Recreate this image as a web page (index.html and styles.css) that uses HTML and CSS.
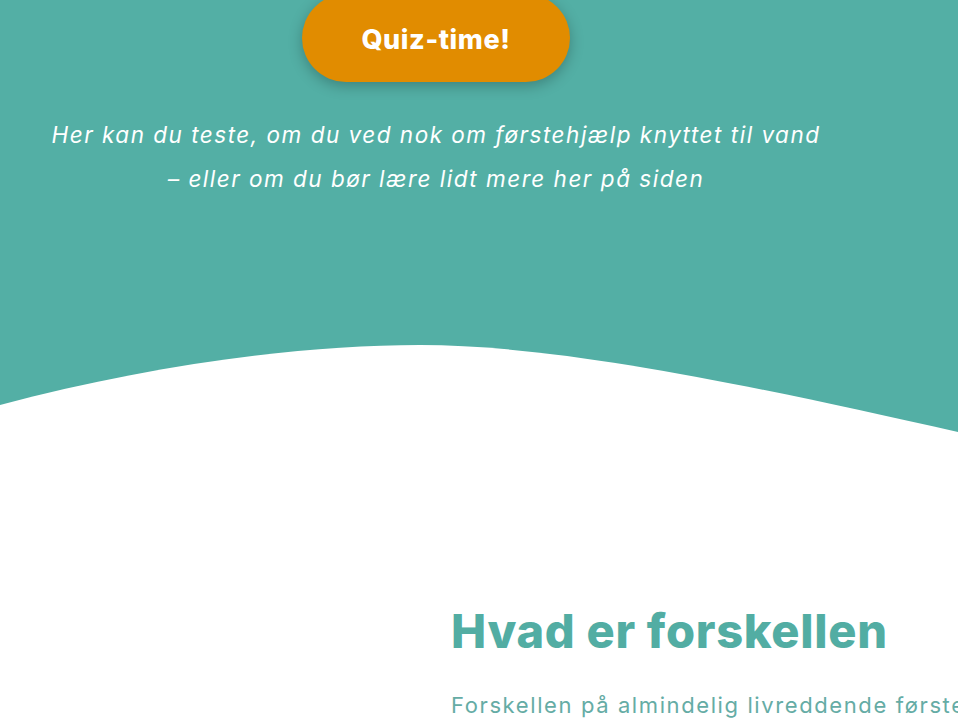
FILE: index.html
```html
<!DOCTYPE html>
<html lang="da">
<head>
<meta charset="utf-8">
<title>Quiz-time</title>
<link rel="stylesheet" href="styles.css">
</head>
<body>
<section class="hero">
  <div class="hero-inner">
    <a class="quiz-btn" href="#">Quiz-time!</a>
    <p class="intro">Her kan du teste, om du ved nok om førstehjælp knyttet til vand<br>– eller om du bør lære lidt mere her på siden</p>
  </div>
  <svg class="wave" viewBox="0 0 958 100" preserveAspectRatio="none" aria-hidden="true">
    <path d="M0,65 C150,25 300,5 420,5 C560,5 750,45 958,92 L958,100 L0,100 Z" fill="#ffffff"/>
  </svg>
</section>
<section class="content">
  <h2 class="title">Hvad er forskellen</h2>
  <p class="lead">Forskellen på almindelig livreddende førstehjælp og førstehjælp ved vand</p>
</section>
</body>
</html>
```
FILE: styles.css
```css
html, body {
  margin: 0;
  padding: 0;
  background: #ffffff;
  overflow: hidden;
}
body {
  font-family: Inter, "Open Sans", sans-serif;
}
.hero {
  background: #53afa5;
}
.hero-inner {
  width: 872px;
  height: 340px;
  display: flex;
  flex-direction: column;
  align-items: center;
}
.quiz-btn {
  margin-top: -6px;
  width: 268px;
  height: 88px;
  border-radius: 44px;
  background: #e18c00;
  color: #ffffff;
  font-weight: 800;
  font-size: 27px;
  letter-spacing: 0.6px;
  text-decoration: none;
  display: flex;
  align-items: center;
  justify-content: center;
  padding-top: 2px;
  box-sizing: border-box;
  box-shadow: 0 4px 14px rgba(0, 0, 0, 0.25);
}
.intro {
  margin: 31px 0 0;
  text-align: center;
  color: #ffffff;
  font-style: italic;
  font-size: 22.5px;
  letter-spacing: 1.5px;
  line-height: 44px;
  white-space: nowrap;
}
.wave {
  display: block;
  width: 100%;
  height: 100px;
}
.content {
  padding: 163px 0 0 451px;
  overflow: hidden;
}
.title {
  margin: 0;
  color: #52ada3;
  font-size: 47px;
  font-weight: 800;
  letter-spacing: 0.7px;
  line-height: 56px;
  white-space: nowrap;
}
.lead {
  margin: 31px 0 0;
  color: #65aca5;
  font-size: 22px;
  letter-spacing: 1.6px;
  line-height: 30px;
  white-space: nowrap;
}
```
